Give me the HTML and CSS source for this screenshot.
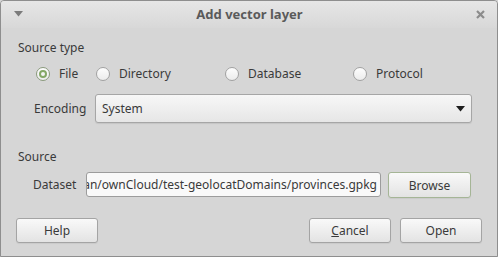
FILE: index.html
```html
<!DOCTYPE html>
<html lang="en">
<head>
    <meta charset="UTF-8">
    <title>Add vector layer</title>
    <link rel="stylesheet" href="styles.css">
</head>
<body>
    <div class="window">
        <div class="titlebar">
            <svg class="menu-arrow" width="9" height="6" viewBox="0 0 9 6"><path d="M0 0 H9 L4.5 5.5 Z" fill="#7b7b7b"/></svg>
            <span class="title">Add vector layer</span>
            <svg class="close" width="9" height="9" viewBox="0 0 9 9"><path d="M1 1 L8 8 M8 1 L1 8" stroke="#8c8c8c" stroke-width="2.2"/></svg>
        </div>

        <div class="content">
            <div class="group-title">Source type</div>
            <div class="radio-row">
                <label class="radio"><span class="dot checked"></span>File</label>
                <label class="radio"><span class="dot"></span>Directory</label>
                <label class="radio"><span class="dot"></span>Database</label>
                <label class="radio"><span class="dot"></span>Protocol</label>
            </div>
            <div class="field-row encoding-row">
                <span class="field-label enc-label">Encoding</span>
                <div class="combo">
                    <span>System</span>
                    <svg width="9" height="6" viewBox="0 0 9 6"><path d="M0 0 H9 L4.5 5.5 Z" fill="#1e1e1e"/></svg>
                </div>
            </div>

            <div class="group-title source-title">Source</div>
            <div class="field-row dataset-row">
                <span class="field-label ds-label">Dataset</span>
                <div class="text-input"><span>an/ownCloud/test-geolocatDomains/provinces.gpkg</span></div>
                <button class="btn browse">Browse</button>
            </div>

            <div class="button-row">
                <button class="btn">Help</button>
                <div class="spacer"></div>
                <button class="btn"><u>C</u>ancel</button>
                <button class="btn">Open</button>
            </div>
        </div>
    </div>
</body>
</html>
```

FILE: styles.css
```css
body {
    margin: 0;
    font-family: "Noto Sans", sans-serif;
    font-size: 12px;
    color: #3a3a3a;
    background: #d6d6d6;
}
.window {
    width: 498px;
    height: 257px;
    box-sizing: border-box;
    border: 1px solid #8e8e8e;
    border-radius: 4px 4px 0 0;
    background: #d6d6d6;
    overflow: hidden;
}
.titlebar {
    height: 27px;
    display: flex;
    align-items: center;
    background: linear-gradient(#e6e6e6, #d8d8d8);
}
.menu-arrow {
    margin-left: 13px;
    margin-top: -1px;
}
.title {
    flex: 1;
    text-align: center;
    font-weight: bold;
    font-size: 13px;
    color: #5a5a5a;
    margin-top: -1px;
}
.close {
    margin-right: 12px;
    margin-top: -1px;
}
.content {
    display: flex;
    flex-direction: column;
    padding: 0 15px 0 17px;
}
.group-title {
    line-height: 16px;
    margin-top: 12px;
}
.radio-row {
    display: grid;
    grid-template-columns: 60px 129px 128px 1fr;
    margin-top: 10px;
    margin-left: 18px;
    height: 16px;
}
.radio {
    display: flex;
    align-items: center;
    line-height: 16px;
}
.dot {
    width: 12px;
    height: 12px;
    border-radius: 50%;
    border: 1px solid #a2a2a2;
    background: linear-gradient(#fdfdfd, #ececec);
    margin-right: 9px;
    position: relative;
}
.dot.checked {
    border-color: #8a9a7c;
}
.dot.checked::after {
    content: "";
    position: absolute;
    left: 2px;
    top: 2px;
    width: 4px;
    height: 4px;
    border-radius: 50%;
    border: 2px solid #84a866;
    background: #f4f4f4;
}
.field-row {
    display: flex;
    align-items: center;
}
.encoding-row {
    margin-top: 12px;
    height: 29px;
}
.field-label {
    line-height: 16px;
}
.enc-label {
    width: 61px;
    margin-left: 16px;
}
.combo {
    flex: 1;
    height: 29px;
    box-sizing: border-box;
    margin-right: 10px;
    border: 1px solid #a6a6a6;
    border-radius: 3px;
    background: linear-gradient(#f7f7f7, #e6e6e6);
    display: flex;
    align-items: center;
    justify-content: space-between;
    padding: 0 6px 0 6px;
    box-shadow: 0 1px 1px rgba(0, 0, 0, 0.08);
}
.source-title {
    margin-top: 26px;
}
.dataset-row {
    margin-top: 7px;
    height: 26px;
}
.ds-label {
    width: 53px;
    margin-left: 15px;
}
.text-input {
    width: 295px;
    height: 25px;
    box-sizing: border-box;
    border: 1px solid #9c9c9c;
    border-radius: 3px;
    background: #f9f9f9;
    overflow: hidden;
    display: flex;
    align-items: center;
    justify-content: flex-end;
    padding-right: 3px;
    white-space: nowrap;
    margin-top: -1px;
}
.btn {
    font-family: "Noto Sans", sans-serif;
    font-size: 12px;
    color: #3a3a3a;
    width: 82px;
    height: 25px;
    border: 1px solid #a4a4a4;
    border-radius: 3px;
    background: linear-gradient(#f9f9f9, #e3e3e3);
    box-shadow: 0 1px 1px rgba(0, 0, 0, 0.06);
    padding: 0;
}
.browse {
    width: 83px;
    height: 26px;
    margin-left: 7px;
    border-color: #a5b596;
}
.button-row {
    display: flex;
    margin-top: 20px;
    margin-left: -2px;
}
.spacer {
    flex: 1;
}
.button-row .btn + .btn {
    margin-left: 9px;
}
```
